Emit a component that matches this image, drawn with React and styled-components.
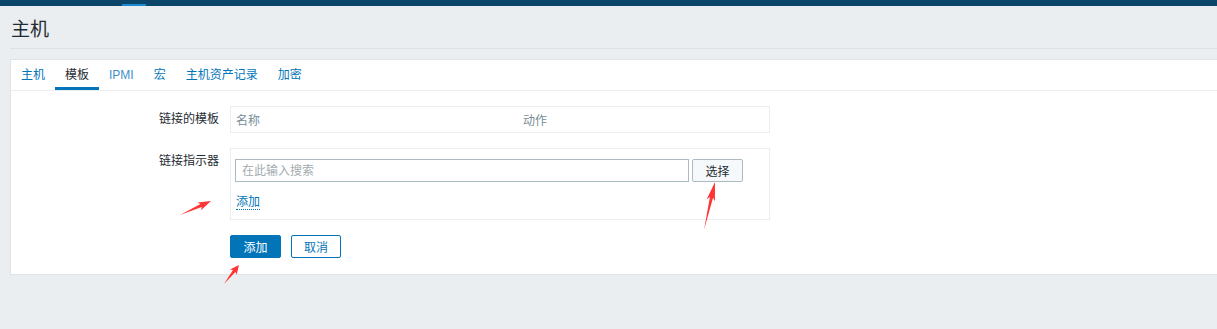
import React from "react";
import styled, { createGlobalStyle } from "styled-components";

const GlobalStyle = createGlobalStyle`
  html, body {
    margin: 0;
    padding: 0;
    background: #ebeef0;
    font-family: "Liberation Sans", Arial, "Noto Sans CJK SC", sans-serif;
    font-size: 12px;
    color: #1f2c33;
  }
`;

const Page = styled.div`
  position: relative;
  width: 1217px;
  height: 329px;
  overflow: hidden;
`;

const TopBar = styled.div`
  height: 6px;
  background: #0b466a;
  display: flex;
  align-items: flex-end;
`;

const TopAccent = styled.div`
  margin-left: 122px;
  width: 24px;
  height: 2px;
  background: #1b8bd0;
`;

const Header = styled.div`
  margin: 0 0 0 10px;
  height: 42px;
  border-bottom: 1px solid #dde2e5;
  display: flex;
  align-items: center;
`;

const Title = styled.h1`
  margin: 0;
  padding-left: 1px;
  font-size: 19px;
  font-weight: normal;
  color: #1f2c33;
`;

const Card = styled.div`
  margin: 10px 0 0 10px;
  background: #fff;
  border: 1px solid #dfe4e7;
  border-right: none;
  padding-bottom: 16px;
`;

const Tabs = styled.div`
  display: flex;
  height: 30px;
  border-bottom: 1px solid #ebeef0;
`;

const Tab = styled.div`
  padding: 0 10px;
  line-height: 30px;
  font-size: 12px;
  color: ${(p) => (p.$active ? "#1f2c33" : p.$muted ? "#3d8fcc" : "#0275b8")};
  box-shadow: ${(p) => (p.$active ? "inset 0 -3px 0 #0275b8" : "none")};
`;

const Form = styled.div`
  padding-top: 15px;
  display: flex;
  flex-direction: column;
  gap: 15px;
`;

const Row = styled.div`
  display: flex;
  align-items: flex-start;
`;

const Label = styled.div`
  width: 208px;
  padding-right: 11px;
  text-align: right;
  padding-top: 6px;
  line-height: 15px;
  color: #1f2c33;
`;

const TableBox = styled.div`
  width: 538px;
  height: 25px;
  border: 1px solid #ebeef0;
  display: flex;
  align-items: center;
  color: #768d99;
`;

const HeadCell = styled.div`
  width: ${(p) => p.$w}px;
  padding-left: 5px;
`;

const FieldBox = styled.div`
  width: 534px;
  border: 1px solid #ebeef0;
  padding: 10px 0 9px 4px;
  display: flex;
  flex-direction: column;
  gap: 13px;
`;

const InputRow = styled.div`
  display: flex;
  gap: 3px;
`;

const SearchInput = styled.input`
  box-sizing: border-box;
  width: 454px;
  height: 23px;
  border: 1px solid #acbbc2;
  padding: 0 6px;
  font-family: inherit;
  font-size: 12px;
  outline: none;
  &::placeholder {
    color: #a3abb0;
  }
`;

const SelectButton = styled.button`
  box-sizing: border-box;
  width: 51px;
  height: 23px;
  border: 1px solid #acbbc2;
  border-radius: 2px;
  background: #f6f9fb;
  color: #1f2c33;
  font-family: inherit;
  font-size: 12px;
  padding: 0;
`;

const AddLink = styled.span`
  align-self: flex-start;
  margin-left: 1px;
  color: #0275b8;
  border-bottom: 1px dotted #0275b8;
  line-height: 14px;
`;

const Buttons = styled.div`
  display: flex;
  gap: 10px;
  margin-left: 219px;
`;

const Button = styled.button`
  box-sizing: border-box;
  height: 23px;
  width: ${(p) => p.$w}px;
  border: 1px solid #0275b8;
  border-radius: 2px;
  background: ${(p) => (p.$primary ? "#0275b8" : "#fff")};
  color: ${(p) => (p.$primary ? "#fff" : "#0275b8")};
  font-family: inherit;
  font-size: 12px;
  padding: 0;
`;

const Overlay = styled.svg`
  position: absolute;
  left: 0;
  top: 0;
  pointer-events: none;
`;

function arrowPoints(tx, ty, hx, hy) {
  const dx = hx - tx;
  const dy = hy - ty;
  const len = Math.hypot(dx, dy);
  const ux = dx / len;
  const uy = dy / len;
  const nx = -uy;
  const ny = ux;
  const at = (f, w) => [tx + ux * len * f + nx * w, ty + uy * len * f + ny * w];
  const pts = [
    [tx, ty],
    at(0.68, 1.6),
    at(0.62, 4.2),
    [hx, hy],
    at(0.62, -4.2),
    at(0.68, -1.6),
  ];
  return pts.map((p) => p.join(",")).join(" ");
}

const arrows = [
  [180, 215, 211, 201],
  [704, 230, 715, 182],
  [224, 284, 239, 265],
];

const tabs = ["主机", "模板", "IPMI", "宏", "主机资产记录", "加密"];

export default function App() {
  return (
    <Page>
      <GlobalStyle />
      <TopBar>
        <TopAccent />
      </TopBar>
      <Header>
        <Title>主机</Title>
      </Header>
      <Card>
        <Tabs>
          {tabs.map((t) => (
            <Tab key={t} $active={t === "模板"} $muted={t === "IPMI"}>
              {t}
            </Tab>
          ))}
        </Tabs>
        <Form>
          <Row>
            <Label>链接的模板</Label>
            <TableBox>
              <HeadCell $w={282}>名称</HeadCell>
              <HeadCell $w={200}>动作</HeadCell>
            </TableBox>
          </Row>
          <Row>
            <Label>链接指示器</Label>
            <FieldBox>
              <InputRow>
                <SearchInput placeholder="在此输入搜索" />
                <SelectButton>选择</SelectButton>
              </InputRow>
              <AddLink>添加</AddLink>
            </FieldBox>
          </Row>
          <Buttons>
            <Button $primary $w={51}>添加</Button>
            <Button $w={50}>取消</Button>
          </Buttons>
        </Form>
      </Card>
      <Overlay width="1217" height="329">
        {arrows.map((a, i) => (
          <polygon key={i} points={arrowPoints(...a)} fill="#ff3535" />
        ))}
      </Overlay>
    </Page>
  );
}
